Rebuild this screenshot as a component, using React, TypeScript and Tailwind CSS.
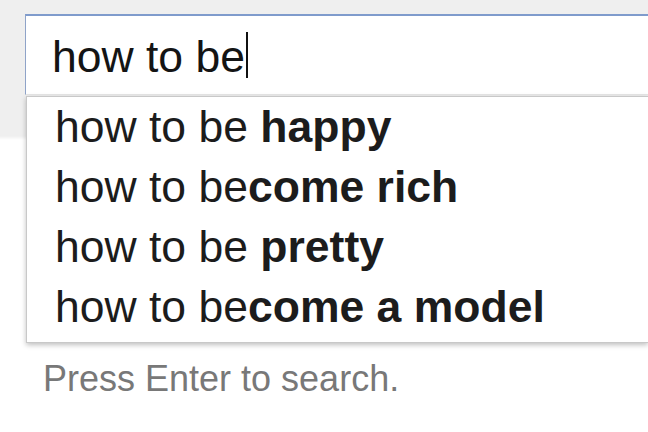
import React from "react";

const rows: { base: string; rest: string }[] = [
  { base: "how to be ", rest: "happy" },
  { base: "how to be", rest: "come rich" },
  { base: "how to be ", rest: "pretty" },
  { base: "how to be", rest: "come a model" },
];

export default function App() {
  return (
    <div className="w-[648px] h-[432px] overflow-hidden bg-[linear-gradient(#efefef_0,#efefef_136px,#ffffff_140px)] font-['Liberation_Sans',Arial,sans-serif] pt-[14px] pl-[25px]">
      <div className="h-[81px] bg-white border-l border-l-[#8fa3c8] border-t-2 border-t-[#7f9bcc] border-b border-b-[#e6e6e6] pl-[26px] flex items-center text-[44.5px] leading-[49px] text-[#141414] whitespace-nowrap">
        <span className="pt-[2px]">how to be</span>
        <span className="inline-block w-[2px] h-[46px] bg-[#111] ml-[1px]" />
      </div>
      <div className="ml-[1px] mt-px bg-white border border-r-0 border-[#c8c8c8] shadow-[0_2px_5px_rgba(0,0,0,0.25)] pb-[5px] pl-[28px] text-[44.5px] leading-[60px] text-[#1c1c1c] whitespace-nowrap">
        {rows.map((r, i) => (
          <div key={i}>
            <span>{r.base}</span>
            <span className="font-bold">{r.rest}</span>
          </div>
        ))}
      </div>
      <div className="mt-[16px] ml-[18px] text-[36px] leading-[40px] text-[#787878] whitespace-nowrap">
        Press Enter to search.
      </div>
    </div>
  );
}
